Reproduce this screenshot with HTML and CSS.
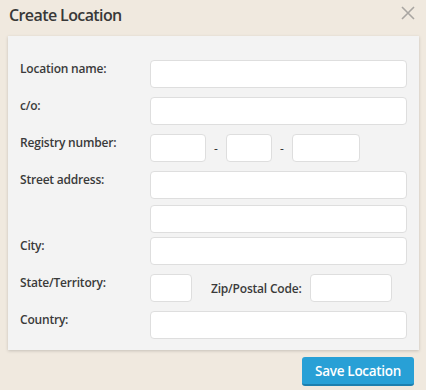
FILE: index.html
```html
<!DOCTYPE html>
<html lang="en">
<head>
    <meta charset="UTF-8">
    <title>Create Location</title>
    <link rel="stylesheet" href="styles.css">
</head>
<body>
    <div class="dialog">
        <div class="dialog-head">
            <h2>Create Location</h2>
            <button class="close" aria-label="Close">
                <svg width="14" height="14" viewBox="0 0 14 14"><path d="M1 1L13 13M13 1L1 13" stroke="#a9a6a2" stroke-width="1.6" fill="none"/></svg>
            </button>
        </div>

        <div class="panel">
            <div class="row">
                <label for="name">Location name:</label>
                <input type="text" id="name" class="full">
            </div>
            <div class="row">
                <label for="co">c/o:</label>
                <input type="text" id="co" class="full">
            </div>
            <div class="row">
                <label for="reg1">Registry number:</label>
                <div class="inline">
                    <input type="text" id="reg1" class="reg-a">
                    <span class="dash">-</span>
                    <input type="text" class="reg-b">
                    <span class="dash">-</span>
                    <input type="text" class="reg-c">
                </div>
            </div>
            <div class="row tight">
                <label for="street">Street address:</label>
                <input type="text" id="street" class="full">
            </div>
            <div class="row tighter">
                <label></label>
                <input type="text" class="full">
            </div>
            <div class="row">
                <label for="city">City:</label>
                <input type="text" id="city" class="full">
            </div>
            <div class="row">
                <label for="state">State/Territory:</label>
                <div class="inline">
                    <input type="text" id="state" class="state">
                    <label for="zip" class="zip-label">Zip/Postal Code:</label>
                    <input type="text" id="zip" class="zip">
                </div>
            </div>
            <div class="row last">
                <label for="country">Country:</label>
                <input type="text" id="country" class="full">
            </div>
        </div>

        <div class="dialog-foot">
            <button class="save">Save Location</button>
        </div>
    </div>
</body>
</html>
```

FILE: styles.css
```css
body {
    margin: 0;
    background-color: #f0e9df;
    font-family: 'Open Sans', sans-serif;
    color: #333;
}

.dialog {
    width: 426px;
    height: 390px;
    box-sizing: border-box;
    padding: 0 7px 0 8px;
}

.dialog-head {
    display: flex;
    justify-content: space-between;
    align-items: flex-start;
    height: 36px;
}

.dialog-head h2 {
    margin: 4px 0 0 1px;
    font-size: 16px;
    font-weight: 600;
    letter-spacing: -0.6px;
    color: #383838;
}

.close {
    background: none;
    border: none;
    padding: 0;
    margin: 6px 4px 0 0;
    cursor: pointer;
}

.panel {
    background-color: #f3f3f3;
    box-shadow: 0 1px 3px rgba(0, 0, 0, 0.18);
    padding: 24px 12px 11px 12px;
}

.row {
    display: flex;
    align-items: flex-start;
    margin-bottom: 9px;
}

.row.tight {
    margin-bottom: 6px;
}

.row.tighter {
    margin-bottom: 4px;
}

.row.last {
    margin-bottom: 0;
}

.row > label {
    width: 130px;
    flex-shrink: 0;
    font-size: 12px;
    font-weight: 600;
    letter-spacing: -0.2px;
    color: #3a3a3a;
}

input {
    height: 28px;
    box-sizing: border-box;
    border: 1px solid #dedede;
    border-radius: 4px;
    background: #fff;
    font-family: inherit;
    padding: 0 6px;
    margin: 0;
}

input.full {
    width: 257px;
}

.inline {
    display: flex;
    align-items: center;
}

.reg-a {
    width: 56px;
}

.reg-b {
    width: 46px;
}

.reg-c {
    width: 68px;
}

.dash {
    width: 20px;
    text-align: center;
    font-size: 12px;
}

.state {
    width: 42px;
}

.zip-label {
    font-size: 12px;
    font-weight: 600;
    letter-spacing: -0.2px;
    color: #3a3a3a;
    margin: 0 8px 0 19px;
}

.zip {
    width: 82px;
}

.dialog-foot {
    display: flex;
    justify-content: flex-end;
    padding: 7px 5px 0 0;
}

.save {
    background-color: #28a0d6;
    color: #fff;
    border: none;
    border-bottom: 2px solid #1d7fae;
    border-radius: 3px;
    font-family: inherit;
    font-size: 13.5px;
    font-weight: 600;
    letter-spacing: -0.3px;
    padding: 5px 13px 4px 13px;
    cursor: pointer;
}
```
